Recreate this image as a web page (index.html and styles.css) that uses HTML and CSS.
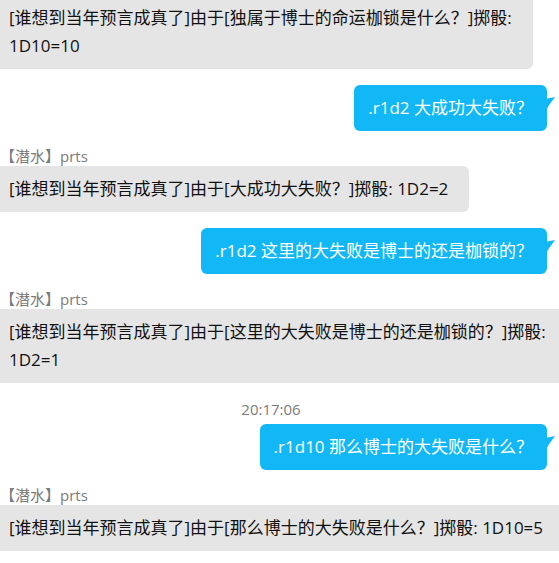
FILE: index.html
```html
<!DOCTYPE html>
<html lang="zh-CN">
<head>
    <meta charset="UTF-8">
    <meta name="viewport" content="width=device-width, initial-scale=1.0">
    <title>prts</title>
    <link rel="stylesheet" href="styles.css">
</head>
<body>
    <!-- Chat log, scrolled a little past the first message -->
    <div class="chat">
        <div class="msg msg-in first">
            <div class="bubble">[谁想到当年预言成真了]由于[独属于博士的命运枷锁是什么？]掷骰: <br>1D10=10</div>
        </div>

        <div class="msg msg-out">
            <div class="bubble">.r1d2 大成功大失败？</div>
        </div>

        <div class="msg msg-in">
            <div class="name">【潜水】prts</div>
            <div class="bubble">[谁想到当年预言成真了]由于[大成功大失败？]掷骰: 1D2=2</div>
        </div>

        <div class="msg msg-out">
            <div class="bubble">.r1d2 这里的大失败是博士的还是枷锁的？</div>
        </div>

        <div class="msg msg-in">
            <div class="name">【潜水】prts</div>
            <div class="bubble">[谁想到当年预言成真了]由于[这里的大失败是博士的还是枷锁的？]掷骰: <br>1D2=1</div>
        </div>

        <div class="time">20:17:06</div>

        <div class="msg msg-out">
            <div class="bubble">.r1d10 那么博士的大失败是什么？</div>
        </div>

        <div class="msg msg-in">
            <div class="name">【潜水】prts</div>
            <div class="bubble">[谁想到当年预言成真了]由于[那么博士的大失败是什么？]掷骰: 1D10=5</div>
        </div>
    </div>
</body>
</html>
```

FILE: styles.css
```css
html, body {
    height: 100%;
}

body {
    margin: 0;
    padding: 0;
    overflow: hidden;
    background: #ffffff;
    font-family: "Open Sans", "Noto Sans CJK SC", sans-serif;
    font-size: 17px;
    color: #111111;
}

.chat {
    display: flex;
    flex-direction: column;
    margin-top: -5px;
}

.msg {
    display: flex;
    flex-direction: column;
    margin-top: 16px;
}

.msg.first {
    margin-top: 0;
}

.msg-in {
    align-items: flex-start;
}

.msg-out {
    align-items: flex-end;
    padding-right: 12px;
}

.name {
    font-size: 15px;
    line-height: 19px;
    color: #7b7b7b;
    white-space: nowrap;
}

.bubble {
    position: relative;
    line-height: 28px;
    padding: 9px 21px 9px 14px;
    border-radius: 6px;
    white-space: nowrap;
}

.msg-in .bubble {
    background: #e5e5e5;
    margin-left: -5px;
}

/* outgoing: blue with a small tail on the right */
.msg-out .bubble {
    background: #12b7f5;
    color: #ffffff;
    padding: 9px 14px 9px 14px;
}

.msg-out .bubble::after {
    content: "";
    position: absolute;
    right: -8px;
    top: 12px;
    width: 10px;
    height: 15px;
    background: #12b7f5;
    clip-path: polygon(0 2px, 100% 0, 40% 55%, 0 100%);
}

.time {
    margin-top: 16px;
    padding-right: 17px;
    text-align: center;
    font-size: 15px;
    line-height: 20px;
    color: #7b7b7b;
}

.time + .msg {
    margin-top: 5px;
}
```
